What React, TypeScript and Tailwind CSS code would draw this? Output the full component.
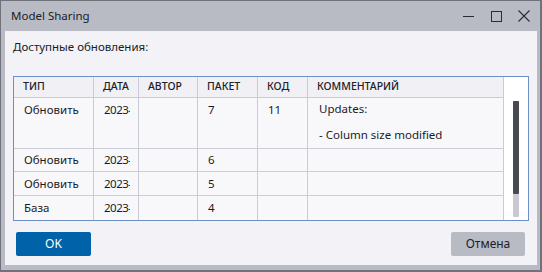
import React from "react";

const font = { fontFamily: '"Noto Sans", "Open Sans", sans-serif' };

type Row = { type: string; date: string; author: string; pkg: string; code: string; comment: string[]; tall?: boolean };

const rows: Row[] = [
  { type: "Обновить", date: "2023-04-12", author: "", pkg: "7", code: "11", comment: ["Updates:", "", "- Column size modified"], tall: true },
  { type: "Обновить", date: "2023-04-11", author: "", pkg: "6", code: "", comment: [] },
  { type: "Обновить", date: "2023-04-10", author: "", pkg: "5", code: "", comment: [] },
  { type: "База", date: "2023-04-09", author: "", pkg: "4", code: "", comment: [] },
];

const cols = ["w-[80px]", "w-[45px]", "w-[59px]", "w-[60px]", "w-[50px]", "w-[196px]"];

export default function App() {
  return (
    <div style={font} className="w-[542px] h-[272px] bg-[#b8bbc4] border-l border-t border-r-2 border-b-2 border-[#6f727a] flex flex-col text-[#1b1b1f]">
      {/* Title bar */}
      <div className="h-[30px] flex items-center shrink-0">
        <div className="pl-[10px] text-[11.5px] leading-none text-[#202026] flex-1">Model Sharing</div>
        <div className="flex items-center h-full">
          <div className="w-[28px] flex justify-center">
            <div className="w-[11px] h-px bg-[#2a2c33] mt-[1px]" />
          </div>
          <div className="w-[28px] flex justify-center">
            <div className="w-[11px] h-[11px] border border-[#2a2c33]" />
          </div>
          <div className="w-[28px] flex justify-center mr-[2px]">
            <svg width="12" height="12" viewBox="0 0 12 12">
              <path d="M0.5 0.5 L11.5 11.5 M11.5 0.5 L0.5 11.5" stroke="#2a2c33" strokeWidth="1.1" />
            </svg>
          </div>
        </div>
      </div>
      {/* Content */}
      <div className="flex-1 ml-[4px] mr-[3px] mb-[5px] bg-[#f2f2f7] flex flex-col">
        <div className="pl-[8px] pt-[8px] text-[11.5px] leading-[16px] h-[45px]">Доступные обновления:</div>
        <div className="mx-[8px] h-[145px] border border-[#6c8fc6] bg-white flex">
          <div className="flex flex-col w-[490px]">
            {/* Header */}
            <div className="flex h-[21px] border-b border-[#c9ccd6] bg-[#f0f0f5] text-[10.5px] font-medium text-[#202028]">
              {["ТИП", "ДАТА", "АВТОР", "ПАКЕТ", "КОД", "КОММЕНТАРИЙ"].map((h, i) => (
                <div key={h} className={`${cols[i]} shrink-0 border-r border-[#c9ccd6] flex items-center pl-[9px] overflow-hidden whitespace-nowrap`}>
                  {h}
                </div>
              ))}
            </div>
            {rows.map((r, ri) => {
              const cells = [r.type, r.date, r.author, r.pkg, r.code];
              return (
                <div
                  key={ri}
                  className={`flex bg-[#f8f8fb] text-[11.5px] ${r.tall ? "h-[51px]" : "h-[24px]"} ${ri < rows.length - 1 ? "border-b border-[#c9ccd6]" : ""}`}
                >
                  {cells.map((c, ci) => (
                    <div
                      key={ci}
                      className={`${cols[ci]} shrink-0 border-r border-[#c9ccd6] overflow-hidden whitespace-nowrap pl-[10px] ${r.tall ? "pt-[4px] leading-[16px]" : "flex items-center leading-none"}`}
                    >
                      <div className={ci === 1 ? "w-[26px] overflow-hidden tracking-[-0.5px]" : ""}>{c}</div>
                    </div>
                  ))}
                  <div className={`${cols[5]} shrink-0 border-r border-[#c9ccd6] pl-[11px] ${r.tall ? "pt-[4px] leading-[13px]" : ""}`}>
                    {r.comment.map((l, li) => (
                      <div key={li} className={l === "" ? "h-[13px]" : "whitespace-nowrap"}>
                        {l}
                      </div>
                    ))}
                  </div>
                </div>
              );
            })}
          </div>
          {/* Scroll area */}
          <div className="flex-1 bg-white pl-[9px] pt-[24px] pb-[3px]">
            <div className="w-[6px] h-[116px] bg-[#c8c9d2] rounded-[1px] flex flex-col">
              <div className="h-[93px] bg-[#474a51] rounded-[1px]" />
            </div>
          </div>
        </div>
        <div className="flex justify-between pl-[11px] pr-[12px] pt-[11px]">
          <button className="w-[75px] h-[24px] bg-[#0062a8] text-white text-[12px] rounded-[2px] leading-none">OK</button>
          <button className="w-[74px] h-[24px] bg-[#b8bbc4] text-[#202026] text-[12px] rounded-[2px] leading-none">Отмена</button>
        </div>
      </div>
    </div>
  );
}
